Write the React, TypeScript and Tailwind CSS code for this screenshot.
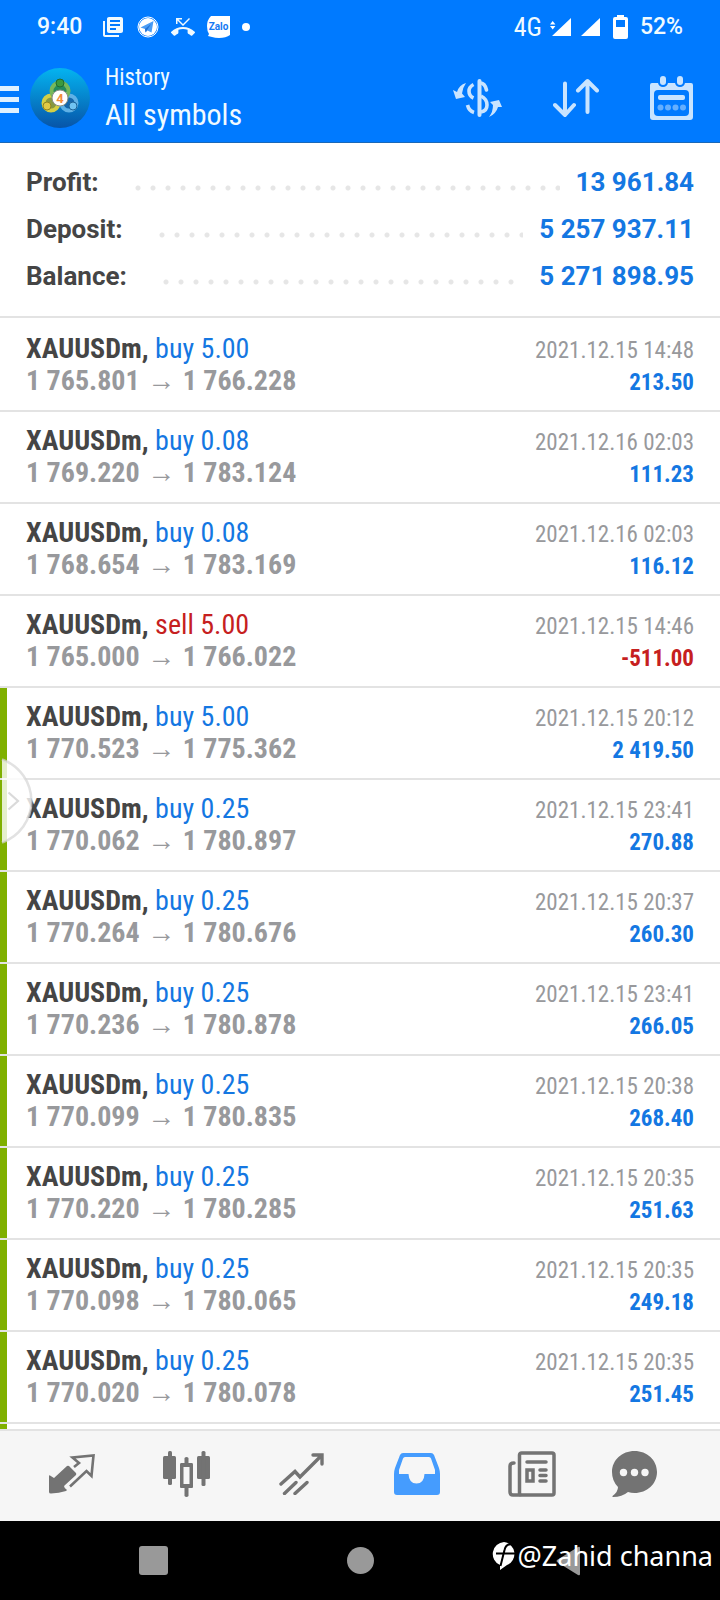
import { MdLibraryBooks, MdPhoneMissed } from 'react-icons/md';

type Deal = {
    side: 'buy' | 'sell';
    volume: string;
    open: string;
    close: string;
    time: string;
    profit: string;
    tp?: boolean;
};

const deals: Deal[] = [
    { side: 'buy', volume: '5.00', open: '1 765.801', close: '1 766.228', time: '2021.12.15 14:48', profit: '213.50' },
    { side: 'buy', volume: '0.08', open: '1 769.220', close: '1 783.124', time: '2021.12.16 02:03', profit: '111.23' },
    { side: 'buy', volume: '0.08', open: '1 768.654', close: '1 783.169', time: '2021.12.16 02:03', profit: '116.12' },
    { side: 'sell', volume: '5.00', open: '1 765.000', close: '1 766.022', time: '2021.12.15 14:46', profit: '-511.00' },
    { side: 'buy', volume: '5.00', open: '1 770.523', close: '1 775.362', time: '2021.12.15 20:12', profit: '2 419.50', tp: true },
    { side: 'buy', volume: '0.25', open: '1 770.062', close: '1 780.897', time: '2021.12.15 23:41', profit: '270.88', tp: true },
    { side: 'buy', volume: '0.25', open: '1 770.264', close: '1 780.676', time: '2021.12.15 20:37', profit: '260.30', tp: true },
    { side: 'buy', volume: '0.25', open: '1 770.236', close: '1 780.878', time: '2021.12.15 23:41', profit: '266.05', tp: true },
    { side: 'buy', volume: '0.25', open: '1 770.099', close: '1 780.835', time: '2021.12.15 20:38', profit: '268.40', tp: true },
    { side: 'buy', volume: '0.25', open: '1 770.220', close: '1 780.285', time: '2021.12.15 20:35', profit: '251.63', tp: true },
    { side: 'buy', volume: '0.25', open: '1 770.098', close: '1 780.065', time: '2021.12.15 20:35', profit: '249.18', tp: true },
    { side: 'buy', volume: '0.25', open: '1 770.020', close: '1 780.078', time: '2021.12.15 20:35', profit: '251.45', tp: true },
];

const summary = [
    { label: 'Profit:', value: '13 961.84' },
    { label: 'Deposit:', value: '5 257 937.11' },
    { label: 'Balance:', value: '5 271 898.95' },
];

const StatusBar = () => (
    <div className="flex h-[54px] items-center justify-between pl-[37px] pr-[37px] font-['Roboto',sans-serif] text-[23px] font-medium">
        <div className="flex items-center">
            <span className="w-[64px]">9:40</span>
            <MdLibraryBooks className="mr-3 size-[24px]" />
            <svg className="mr-3 size-[22px]" viewBox="0 0 22 22">
                <circle cx="11" cy="11" r="10" fill="none" stroke="#fff" strokeWidth="1" />
                <circle cx="11" cy="11" r="9" fill="#fff" />
                <path d="M3.5 11.5 16.5 5 14.5 16.5 10.5 14.5 8.5 16.5 8 13Z" fill="#4a9cf5" />
                <path d="m8 13 6-5-4 6.2-1.5 2Z" fill="#2272d4" />
            </svg>
            <MdPhoneMissed className="mr-3 size-[24px]" />
            <svg className="mr-3 h-[23px] w-[23px]" viewBox="0 0 23 23">
                <path d="M4 0H23V19Q19 22 12 22 8 22 5 21L1 20 2 18Q0 15 0 10 0 4 4 0Z" fill="#fff" />
                <text x="11.5" y="14" textAnchor="middle" fontSize="10" fontWeight="700" fill="#1679f3" fontFamily="Roboto, sans-serif">Zalo</text>
            </svg>
            <span className="size-2 rounded-full bg-white" />
        </div>
        <div className="flex items-center">
            <span className="mr-2 font-['Roboto_Condensed','Liberation_Sans_Narrow',sans-serif] text-[26px] font-normal">4G</span>
            <svg className="mr-[10px] h-[18px] w-[21px]" viewBox="0 0 21 18" fill="#fff">
                <path d="M21 0V18H2ZM0 6.5 2.7 3 5.4 6.5ZM0 8 2.7 11.5 5.4 8Z" />
            </svg>
            <svg className="mr-[13px] h-[18px] w-[19px]" viewBox="0 0 19 18" fill="#fff">
                <path d="M19 0V18H0Z" />
            </svg>
            <svg className="mr-3 h-[24px] w-[15px]" viewBox="0 0 15 24">
                <path d="M4 0H11V2H13Q15 2 15 4V22Q15 24 13 24H2Q0 24 0 22V4Q0 2 2 2H4Z" fill="#fff" />
                <path d="M3 5H12V12H3Z" fill="#007aff" />
            </svg>
            <span>52%</span>
        </div>
    </div>
);

const AppLogo = () => (
    <svg className="size-[60px]" viewBox="0 0 60 60">
        <defs>
            <linearGradient id="disc" x1="0" y1="0" x2="0" y2="1">
                <stop offset="0" stopColor="#04b4f0" />
                <stop offset="1" stopColor="#0754a8" />
            </linearGradient>
        </defs>
        <circle cx="30" cy="30" r="30" fill="url(#disc)" />
        <circle cx="21" cy="35" r="7.5" fill="#a8a020" fillOpacity=".8" stroke="#d3cf45" strokeWidth="4" />
        <circle cx="39" cy="35" r="7.5" fill="#1a62a5" fillOpacity=".8" stroke="#5fb1e6" strokeWidth="4" />
        <circle cx="30" cy="23" r="8.5" fill="#2c8a3c" fillOpacity=".8" stroke="#77b85a" strokeWidth="4" />
        <circle cx="30" cy="15" r="4" fill="#3c9a3e" stroke="#1f6b30" strokeWidth="1" />
        <circle cx="17" cy="38" r="4" fill="#e0c945" stroke="#8f8420" strokeWidth="1" />
        <circle cx="43" cy="38" r="4" fill="#71c3f2" stroke="#1d6296" strokeWidth="1" />
        <circle cx="30" cy="30" r="8" fill="#fff" stroke="#8a8f87" strokeWidth="1" />
        <text x="30" y="35" textAnchor="middle" fontSize="13" fontWeight="700" fill="#f28c3a" fontFamily="Roboto, sans-serif">4</text>
    </svg>
);

const DollarIcon = () => (
    <svg className="h-[38px] w-[49px]" viewBox="0 0 49 38" fill="none" stroke="#c9e4ff" strokeWidth="3.6">
        <path d="M26.5 2V36" strokeLinecap="round" strokeWidth="4" />
        <path d="M27 4Q32 4 33.5 11" strokeLinecap="round" />
        <path d="M20.5 5.5Q16 8 16 12 16 17 20.5 19" />
        <path d="M28 17Q34 20 34 26 34 32 28 33" />
        <path d="M14.5 26Q16 32 21 33.5" />
        <path d="M13 4Q6 6 4 13L0 11 3 20 12 18 9 14.500Q10 8 13 4Z" fill="#c9e4ff" stroke="none" />
        <path d="M36 38Q43 35 45 28L49 28 46 21 37 23 40 26Q40 33 36 38Z" fill="#c9e4ff" stroke="none" />
    </svg>
);

const SortIcon = () => (
    <svg className="h-[40px] w-[46px]" viewBox="0 0 46 40" fill="none" stroke="#c9e4ff" strokeWidth="4" strokeLinecap="round" strokeLinejoin="round">
        <path d="M12 5.500V37M2 27 12 37 21 27" />
        <path d="M34.500 34V3M25 12.500 34.500 3 44 12.500" />
    </svg>
);

const CalendarIcon = () => (
    <svg className="h-[44px] w-[43px]" viewBox="0 0 43 44">
        <path d="M2 7H8Q9 11 13 11T18 7H25Q26 11 30 11T35 7H41Q43 7 43 9V41Q43 44 40 44H3Q0 44 0 41V9Q0 7 2 7Z" fill="#c9e4ff" />
        <rect x="4" y="14" width="35" height="26" rx="4" fill="#007aff" />
        <rect x="10" y="0" width="6" height="9" rx="3" fill="#c9e4ff" />
        <rect x="27" y="0" width="6" height="9" rx="3" fill="#c9e4ff" />
        <rect x="8" y="19" width="27" height="5" rx="2" fill="#c9e4ff" />
        <g fill="#65affe">
            <circle cx="10.500" cy="31.500" r="3" />
            <circle cx="18" cy="31.500" r="3" />
            <circle cx="25.500" cy="31.500" r="3" />
            <circle cx="33" cy="31.500" r="3" />
        </g>
    </svg>
);

const Header = () => (
    <header className="border-b border-[#1a68b8] bg-[#007aff] text-[#f0faff]">
        <StatusBar />
        <div className="flex h-[88px] items-center pr-[27px]">
            <button className="flex h-[60px] items-center" aria-label="Open menu">
                <svg className="mr-[11px] h-[32px] w-[19px]" viewBox="0 -4 19 32" fill="#dff1ff">
                    <path d="M0 0H19V5H0ZM0 11H19V16H0ZM0 22H19V27H0Z" />
                </svg>
                <AppLogo />
            </button>
            <div className="ml-[15px] flex flex-1 flex-col pt-[2px]">
                <span className="text-[23px] leading-[32px]">History</span>
                <h1 className="text-[30px] leading-[42px]">All symbols</h1>
            </div>
            <div className="flex items-center gap-[51px]">
                <button aria-label="Filter by symbol"><DollarIcon /></button>
                <button aria-label="Sort"><SortIcon /></button>
                <button aria-label="Select period"><CalendarIcon /></button>
            </div>
        </div>
    </header>
);

const Summary = () => (
    <dl className="px-[26px] pb-[16px] pt-[16px] font-['Roboto',sans-serif] text-[26px] font-bold leading-[47px]">
        {summary.map((row) => (
            <div key={row.label} className="flex">
                <dt className="text-[#454545]">{row.label}</dt>
                <div className="ml-8 mr-4 flex-1 bg-[radial-gradient(circle_at_7px_29px,#e6e6e6_2px,transparent_3px)] bg-[length:15px_47px] bg-repeat-x" />
                <dd className="text-[#1477e2]">{row.value}</dd>
            </div>
        ))}
    </dl>
);

const DealRow = ({ deal }: { deal: Deal }) => (
    <li className="relative flex h-[92px] justify-between border-b-2 border-[#e3e3e3] px-[26px] pt-[13px]">
        {deal.tp && <span className="absolute inset-y-0 left-0 w-[7px] bg-[#7fb000]" />}
        <div className="text-[28px] leading-[32px]">
            <p>
                <b className="text-[#454545]">XAUUSDm,</b>{' '}
                <span className={deal.side === 'buy' ? 'text-[#1477e2]' : 'text-[#c62020]'}>
                    {deal.side} {deal.volume}
                </span>
            </p>
            <p className="flex font-bold text-[#98999c]">
                <span>{deal.open}</span>
                <span className="w-[43px] text-center font-normal">→</span>
                <span>{deal.close}</span>
            </p>
        </div>
        <div className="pt-[2px] text-right text-[23px] leading-[32px]">
            <p className="text-[#98999c]">{deal.time}</p>
            <p className={deal.profit.startsWith('-') ? 'font-bold text-[#c62020]' : 'font-bold text-[#1477e2]'}>{deal.profit}</p>
        </div>
    </li>
);

const tabs = [
    {
        name: 'Quotes',
        icon: (
            <svg className="h-[40px] w-[46px]" viewBox="0 0 46 40">
                <path d="M0 22Q0 21 1 21.500L5 24 18 12Q19 11.500 20 12L27 19Q27.500 20 27 21L15 32Q15 34 18 36L17 37Q10 39 2 39.500 0 39.500 0 38Z" fill="#737373" />
                <path d="M25 13 30 9 23.500 3.500 44.500 1.500 42.500 22 37.500 17 21 32.500" fill="none" stroke="#737373" strokeWidth="2.600" />
            </svg>
        ),
    },
    {
        name: 'Chart',
        icon: (
            <svg className="h-[46px] w-[47px]" viewBox="0 0 47 46" fill="#737373">
                <rect x="0" y="5" width="13" height="23" rx="1.500" />
                <rect x="5" y="0" width="4" height="34" rx="1.500" />
                <rect x="34" y="5" width="13" height="23" rx="1.500" />
                <rect x="38.500" y="0" width="4" height="35" rx="1.500" />
                <path fillRule="evenodd" d="M21.500 7Q23.500 5 25.500 7V12H29Q30 12 30 13.500V36Q30 37 29 37H25.500V45Q23.500 47 21.500 45V37H18Q17 37 17 36V13.500Q17 12 18 12H21.500ZM20.500 16V33H26.500V16Z" />
            </svg>
        ),
    },
    {
        name: 'Trade',
        icon: (
            <svg className="h-[42px] w-[45px]" viewBox="0 0 45 42" fill="none" stroke="#737373" strokeWidth="3.400" strokeLinecap="round">
                <path d="M2 31 16 18.500 21 24 42 3M34 2H43V11M5.500 40.500 17 29.500M16 40.500 28 29.500" />
            </svg>
        ),
    },
    {
        name: 'History',
        icon: (
            <svg className="h-[42px] w-[46px]" viewBox="0 0 46 42" fill="#459cfe">
                <path fillRule="evenodd" d="M9 0H37Q39 0 40 2L45 15Q46 18 46 21V39Q46 42 43 42H3Q0 42 0 39V21Q0 18 1 15L6 2Q7 0 9 0ZM11 4Q9.500 4 9 5.500L5 17V21H14.500Q15 30.500 22.500 30.500T30.500 21H41V17L37 5.500Q36.500 4 35 4Z" />
            </svg>
        ),
    },
    {
        name: 'News',
        icon: (
            <svg className="h-[46px] w-[48px]" viewBox="0 0 48 46" fill="none" stroke="#737373" strokeWidth="3.500" strokeLinecap="round">
                <rect x="11.500" y="2" width="34.500" height="42" rx="2" />
                <path d="M12 44H5Q2 44 2 41V15Q2 12 6 12M19 11H38M32 19H38M32 24.500H38M32 30H38" />
                <rect x="19" y="19" width="6" height="11" />
            </svg>
        ),
    },
    {
        name: 'Chat',
        icon: (
            <svg className="h-[47px] w-[45px]" viewBox="0 0 45 47">
                <path d="M22.500 0C35 0 45 9 45 21S35 42 22.500 42Q19 42 16 41 10 46 1 46 0 46 .5 45 6 41 6 36 0 30 0 21C0 9 10 0 22.500 0Z" fill="#737373" />
                <g fill="#f6f6f6">
                    <circle cx="11.500" cy="21.500" r="3.700" />
                    <circle cx="22.500" cy="21.500" r="3.700" />
                    <circle cx="33" cy="21.500" r="3.700" />
                </g>
            </svg>
        ),
    },
];

const TabBar = () => (
    <nav className="grid h-[92px] grid-cols-[repeat(5,115fr)_91fr] border-t-2 border-[#e3e3e3] bg-[#f6f6f6] pb-1 pl-[14px] pr-10">
        {tabs.map((tab) => (
            <button key={tab.name} className="flex items-center justify-center" aria-label={tab.name}>
                {tab.icon}
            </button>
        ))}
    </nav>
);

const SystemBar = () => (
    <div className="relative h-[79px] bg-black pl-[50px] pr-12">
        <div className="grid h-full grid-cols-3 place-items-center">
            <button className="size-[29px] rounded-[3px] bg-[#999]" aria-label="Recent apps" />
            <button className="size-[27px] rounded-full bg-[#999]" aria-label="Home" />
            <button aria-label="Back">
                <svg className="h-[30px] w-[24px]" viewBox="0 0 24 30">
                    <path d="M22 1Q24 0 24 2V28Q24 30 22 29L1 16Q0 15 1 14Z" fill="#999" />
                </svg>
            </button>
        </div>
        <div className="absolute right-[7px] top-[17px] flex items-center gap-[2px] text-white">
            <svg className="h-[28px] w-[24px]" viewBox="0 0 24 28">
                <path d="M12 0A12 12 0 0 1 15 23L8 28V23A12 12 0 0 1 12 0Z" fill="#fff" />
                <path d="M21 2.500Q14 1 12.500 8L8.500 24M4 11.500H24" fill="none" stroke="#000" strokeWidth="2" />
            </svg>
            <span className="font-['Noto_Sans',sans-serif] text-[27px] leading-[36px]">@Zahid channa</span>
        </div>
    </div>
);

const App = () => {
    return (
        <div className="flex min-h-screen flex-col bg-white font-['Roboto_Condensed','Liberation_Sans_Narrow',sans-serif]">
            <Header />
            <main className="relative flex flex-1 flex-col">
                <Summary />
                <ul className="border-t-2 border-[#e3e3e3] pt-[2px]">
                    {deals.map((deal, i) => (
                        <DealRow key={i} deal={deal} />
                    ))}
                </ul>
                {/* start of the next deal, under the tab bar */}
                <div className="min-h-[5px] flex-1 border-l-[7px] border-[#7fb000]" />
                <button className="absolute left-0 top-[612px]" aria-label="Open side panel">
                    <svg className="h-[92px] w-[34px]" viewBox="0 0 34 92">
                        <path d="M2 4.500A44 44 0 0 1 2 87.500Z" fill="#fff" fillOpacity=".8" />
                        <path d="M2 4.500A44 44 0 0 1 2 87.500" fill="none" stroke="#d5d5d5" strokeOpacity=".7" strokeWidth="2.500" />
                        <path d="M8.500 37.500 18 46 8.500 54.500" fill="none" stroke="#dadada" strokeWidth="2.200" />
                    </svg>
                </button>
            </main>
            <TabBar />
            <SystemBar />
        </div>
    );
};

export default App;
